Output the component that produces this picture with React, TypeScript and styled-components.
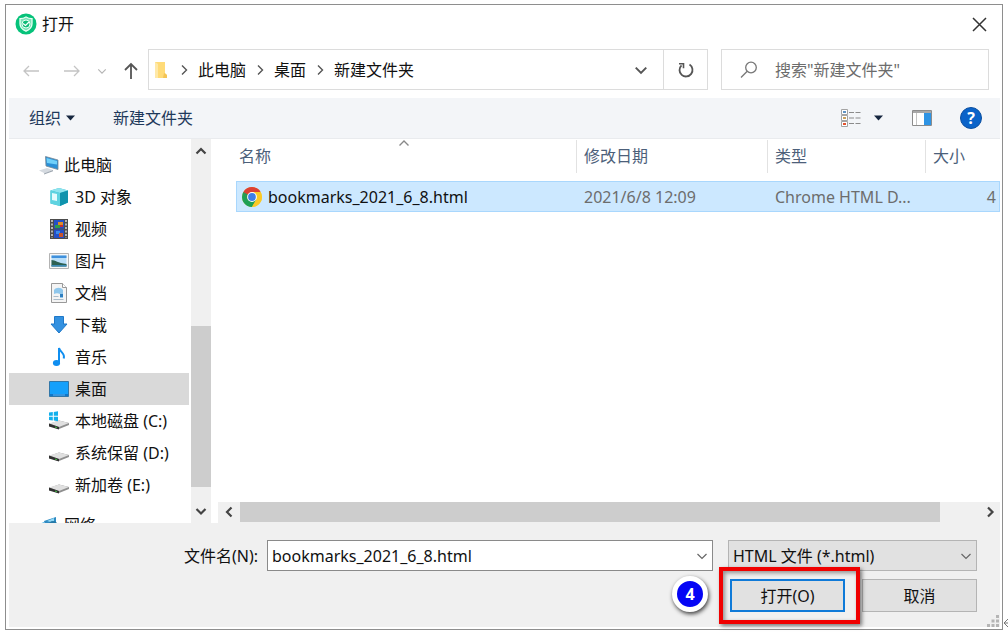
import React from 'react';
import styled, { createGlobalStyle } from 'styled-components';

const GlobalStyle = createGlobalStyle`
  *, *::before, *::after { box-sizing: border-box; }
  body { margin: 0; background: #fff; }
  body, button, input, select {
    font-family: 'Noto Sans', 'Noto Sans CJK SC', sans-serif;
    font-size: 16px;
    line-height: 24px;
    color: #111;
  }
  button { padding: 0; border: 0; background: none; }
  svg { display: block; flex: none; }
`;

const Page = styled.div`
  position: relative;
  min-height: 100vh;
  padding: 4px 5px;
  display: flex;
  overflow: hidden;
`;
const Dialog = styled.main`
  flex: 1;
  min-width: 0;
  display: flex;
  flex-direction: column;
  padding: 0 2px 2px 3px;
  border: 1px solid #8e8e8e;
  background: #fff;
`;

const TitleBar = styled.header`
  height: 44px;
  flex: none;
  display: flex;
  align-items: center;
  gap: 5px;
  padding: 0 13px 6px 6px;
`;
const Title = styled.h1`
  flex: 1;
  margin: 0;
  font-size: 16px;
  font-weight: 400;
`;

const NavRow = styled.div`
  height: 41px;
  flex: none;
  display: flex;
  margin-bottom: 8px;
  padding-right: 11px;
`;
const NavButtons = styled.div`
  width: 139px;
  flex: none;
  display: flex;
  align-items: center;
  justify-content: space-between;
  padding: 2px 8px 0 13px;
`;
const NavPair = styled.div`
  display: flex;
  gap: 23px;
`;
const AddressBar = styled.nav`
  flex: 1;
  min-width: 0;
  display: flex;
  align-items: center;
  border: 1px solid #dcdcdc;
  padding-left: 5px;
`;
const CrumbGap = styled.span`
  width: 28px;
  display: flex;
  justify-content: center;
  &:nth-child(2) { margin-left: 3px; }
`;
const AddressMenu = styled.button`
  width: 44px;
  height: 100%;
  margin-left: auto;
  display: grid;
  place-items: center;
`;
const RefreshButton = styled.button`
  width: 44px;
  height: 100%;
  border-left: 1px solid #dcdcdc;
  display: grid;
  place-items: center;
`;
const SearchBox = styled.label`
  width: 268px;
  margin-left: 13px;
  display: flex;
  align-items: center;
  gap: 17px;
  border: 1px solid #dcdcdc;
  padding-left: 18px;
  input {
    flex: 1;
    min-width: 0;
    padding: 0;
    border: 0;
    outline: 0;
    background: none;
  }
  input::placeholder { color: #6c6c6c; opacity: 1; }
`;

const Toolbar = styled.div`
  height: 41px;
  flex: none;
  display: flex;
  align-items: center;
  padding: 0 18px 0 20px;
  background: #f3f5f8;
  border-bottom: 1px solid #e9ebee;
`;
const ToolButton = styled.button<{ $left?: number }>`
  display: flex;
  align-items: center;
  gap: 5px;
  margin-left: ${p => p.$left ?? 0}px;
  color: #1e395b;
`;
const Spacer = styled.span`
  flex: 1;
`;

const Body = styled.div`
  flex: 1 0 384px;
  height: 384px;
  display: flex;
`;
const Tree = styled.ul`
  width: 180px;
  flex: none;
  margin: 0;
  padding: 10px 0 0;
  list-style: none;
  overflow: hidden;
`;
const TreeItem = styled.li<{ $root?: boolean; $selected?: boolean; $apart?: boolean }>`
  height: 32px;
  display: flex;
  align-items: center;
  gap: ${p => (p.$root ? 5 : 6)}px;
  margin-top: ${p => (p.$apart ? 8 : 0)}px;
  padding-left: ${p => (p.$root ? 30 : 40)}px;
  background: ${p => (p.$selected ? '#d9d9d9' : 'transparent')};
  white-space: nowrap;
`;
const VScroll = styled.div`
  width: 20px;
  flex: none;
  margin-left: 2px;
  display: flex;
  flex-direction: column;
  background: #f0f0f0;
`;
const HScroll = styled.div`
  height: 21px;
  flex: none;
  margin: auto 0 0 7px;
  display: flex;
  background: #f0f0f0;
`;
const ScrollArrow = styled.button<{ $wide?: boolean }>`
  width: ${p => (p.$wide ? 21 : 20)}px;
  height: ${p => (p.$wide ? 20 : 24)}px;
  flex: none;
  display: grid;
  place-items: center;
`;
const Track = styled.div<{ $before: number; $thumb: number; $after: number; $vertical?: boolean }>`
  flex: 1;
  display: grid;
  ${p => (p.$vertical ? 'grid-template-rows' : 'grid-template-columns')}:
    ${p => p.$before}fr ${p => p.$thumb}fr ${p => p.$after}fr;
`;
const Thumb = styled.div<{ $vertical?: boolean }>`
  ${p => (p.$vertical ? 'grid-row: 2' : 'grid-column: 2; height: 20px')};
  background: #cdcdcd;
`;

const FilePane = styled.section`
  flex: 1;
  min-width: 0;
  display: flex;
  flex-direction: column;
`;
const FileTableBox = styled.div`
  position: relative;
  padding-left: 25px;
`;
const FileTable = styled.table`
  width: 100%;
  table-layout: fixed;
  border-collapse: collapse;
`;
const HeadCell = styled.th<{ $width?: number; $first?: boolean }>`
  width: ${p => (p.$width ? `${p.$width}px` : 'auto')};
  height: 42px;
  padding: 1px 0 0;
  vertical-align: top;
  text-align: left;
  font-weight: 400;
  color: #4c607a;
  div {
    height: 33px;
    padding: 4px 0 0 ${p => (p.$first ? 3 : 7)}px;
    border-left: ${p => (p.$first ? '0' : '1px solid #e2e2e2')};
  }
`;
const SortMark = styled.span`
  position: absolute;
  left: 187px;
  top: -2px;
`;
const FileRow = styled.tr`
  height: 31px;
  background: #cce8ff;
  outline: 1px solid #a9d7fd;
  outline-offset: -1px;
`;
const Cell = styled.td<{ $end?: boolean }>`
  padding: 0 4px 0 8px;
  color: #6d6d6d;
  text-align: ${p => (p.$end ? 'right' : 'left')};
  white-space: nowrap;
`;
const NameCell = styled(Cell)`
  padding: 0 0 0 6px;
  color: #111;
  div { display: flex; align-items: center; gap: 6px; }
`;

const Footer = styled.form`
  height: 104px;
  flex: none;
  position: relative;
  display: flex;
  flex-direction: column;
  gap: 8px;
  padding: 17px 23px 0 0;
  background: #f0f0f0;
`;
const FooterRow = styled.div`
  display: flex;
  align-items: center;
  justify-content: flex-end;
`;
const NameLabel = styled.label`
  width: 249px;
  flex: none;
  margin-right: 9px;
  text-align: right;
`;
const Field = styled.div<{ $select?: boolean }>`
  ${p => (p.$select ? 'width: 249px; margin-left: 15px; flex: none' : 'flex: 1; min-width: 0')};
  height: 31px;
  display: grid;
  align-items: center;
  border: 1px solid ${p => (p.$select ? '#b4b4b4' : '#8a8a8a')};
  background: ${p => (p.$select ? '#e1e1e1' : '#fff')};
  > * { grid-area: 1 / 1; }
  > svg { justify-self: end; margin-right: 4px; pointer-events: none; }
  input, select {
    width: 100%;
    height: 28px;
    padding: 0 24px 0 4px;
    border: 0;
    outline: 0;
    appearance: none;
    background: none;
  }
`;
const PushButton = styled.button<{ $primary?: boolean }>`
  width: 115px;
  height: 33px;
  background: #e1e1e1;
  border: ${p => (p.$primary ? '2px solid #0f7ad8' : '1px solid #b4b4b4')};
`;
const Highlighted = styled.div`
  position: relative;
  margin-right: 17px;
`;
const RedFrame = styled.span`
  position: absolute;
  inset: -12px -15px -12px -11px;
  border: 4px solid #f00000;
  box-shadow: 2px 2px 4px rgba(0, 0, 0, 0.5), inset 2px 2px 4px rgba(0, 0, 0, 0.4);
  pointer-events: none;
`;
const StepBadge = styled.span`
  position: absolute;
  left: -58px;
  top: -3px;
  width: 36px;
  height: 36px;
  display: grid;
  place-items: center;
  border: 5px solid #fff;
  border-radius: 50%;
  background: #0505f5;
  box-shadow: 1px 2px 4px rgba(0, 0, 0, 0.75);
  color: #fff;
  font-weight: 700;
`;
const Grip = styled.span`
  position: absolute;
  right: 1px;
  bottom: 0;
`;
const ReturnMark = styled.span`
  position: absolute;
  right: 0;
  bottom: 6px;
`;

type Dir = 'up' | 'down' | 'left' | 'right';
const chevronPaths: Record<Dir, string> = {
  up: 'M1.5 8.5 6 4l4.5 4.5',
  down: 'M1.5 4 6 8.5 10.5 4',
  left: 'M8.5 1.5 4 6l4.5 4.5',
  right: 'M4 1.5 8.5 6 4 10.5',
};
const Chevron = ({ dir, size = 12, color = '#555', width = 1.4 }: { dir: Dir; size?: number; color?: string; width?: number }) => (
  <svg width={size} height={size} viewBox="0 0 12 12" fill="none" stroke={color} strokeWidth={width}>
    <path d={chevronPaths[dir]} />
  </svg>
);
const Caret = () => (
  <svg width="9" height="6" viewBox="0 0 9 6"><path d="M0 .5h9L4.500 5.500z" fill="#16263f" /></svg>
);
const Arrow = ({ dir, color }: { dir: 'left' | 'right' | 'up'; color: string }) => (
  <svg width="18" height="18" viewBox="0 0 18 18" fill="none" stroke={color} strokeWidth={dir === 'up' ? 1.8 : 1.3}>
    {dir === 'left' && <path d="M17 9H2M7 4 2 9l5 5" />}
    {dir === 'right' && <path d="M1 9h15M11 4l5 5-5 5" />}
    {dir === 'up' && <path d="M9 17V2M3 8l6-6 6 6" />}
  </svg>
);

const AppIcon = () => (
  <svg width="22" height="22" viewBox="0 0 22 22">
    <circle cx="11" cy="11" r="10.500" fill="#06c27a" />
    <path d="M11 4c2 1.400 4 1.700 6 1.700v5c0 3.800-2.500 6-6 7.500-3.500-1.500-6-3.700-6-7.500v-5c2 0 4-.3 6-1.700z" fill="#7be3b7" stroke="#e9fff5" strokeWidth="1.300" />
    <circle cx="11" cy="11" r="4" fill="#0fbd78" stroke="#e9fff5" strokeWidth="1" />
    <path d="M8 10.500 10.500 12.500 14 9" fill="none" stroke="#fff" strokeWidth="1.300" />
  </svg>
);
const FolderIcon = () => (
  <svg width="13" height="18" viewBox="0 0 13 18">
    <path d="M1 1h10v11l2 2v3H1z" fill="#ffdb78" />
    <path d="M1 1l3 2v14H1z" fill="#ffe9a8" />
    <path d="M9 17l1-5 3 2v3z" fill="#f4c455" />
  </svg>
);
const RefreshIcon = () => (
  <svg width="18" height="18" viewBox="0 0 18 18" fill="none" stroke="#555" strokeWidth="1.800">
    <path d="M12.500 3.500A6.500 6.500 0 1 1 4.500 4.300" />
    <path d="M2 2.800h4.500v4.500" strokeWidth="1.600" />
  </svg>
);
const SearchIcon = () => (
  <svg width="18" height="18" viewBox="0 0 18 18" fill="none" stroke="#777" strokeWidth="1.300">
    <circle cx="11" cy="6.500" r="5.300" />
    <path d="M7.200 10.300 1 16.500" />
  </svg>
);
const CloseIcon = () => (
  <svg width="15" height="15" viewBox="0 0 15 15" stroke="#333" strokeWidth="1.500"><path d="M1 1l13 13M14 1 1 14" /></svg>
);
const ViewIcon = () => (
  <svg width="20" height="18" viewBox="0 0 20 18" fill="none">
    <g stroke="#a3a3a3" fill="#fff">
      <path d="M.5.5h6v5h-6zM.5 6.500h6v5h-6zM.5 12.500h6v5h-6z" />
    </g>
    <path d="M2 2h3v2H2z" fill="#5f93c4" /><path d="M2 8h3v2H2z" fill="#c9a15d" /><path d="M2 14h3v2H2z" fill="#e2532f" />
    <path d="M8 3.500h5M14.500 3.500h5M8 9h5M14.500 9h5M8 14.500h5M14.500 14.500h5" stroke="#8b8b8b" strokeWidth="1.200" />
  </svg>
);
const PreviewIcon = () => (
  <svg width="20" height="16" viewBox="0 0 20 16">
    <path d="M.5.500h19v15H.5z" fill="#fff" stroke="#8c8c8c" />
    <path d="M1 1h18v2H1z" fill="#a8a8a8" />
    <path d="M12 3h7v12h-7z" fill="#2f94e4" />
    <path d="M4.500 3v12" stroke="#c4c4c4" />
  </svg>
);
const HelpDisc = styled.span`
  width: 22px;
  height: 22px;
  display: grid;
  place-items: center;
  border: 1px solid #0b4fa0;
  border-radius: 50%;
  background: #0a63c9;
  color: #fff;
  font-weight: 700;
  line-height: 20px;
`;

const PcIcon = () => (
  <svg width="20" height="20" viewBox="0 0 20 20">
    <path d="M6.500 1.500 19 5v9.500L7 11z" fill="#2a8fd6" stroke="#7a8893" strokeWidth=".8" />
    <path d="M7.500 3l10.500 3v3.500L8 8z" fill="#6fd0fa" />
    <path d="M0 15.500 8 13l6 2-8 3.500z" fill="#d5dae0" /><path d="M5 18.500l9-3.500v1.200L5 19.500z" fill="#9aa3ad" />
  </svg>
);
const CubeIcon = () => (
  <svg width="20" height="20" viewBox="0 0 20 20">
    <path d="M10 1l9 2.500v12L11 19l-9.500-2.500v-13z" fill="#2fb9cf" />
    <path d="M10 1l9 2.500L11 6 1.500 3.500z" fill="#8fe4ee" />
    <path d="M1.500 3.500 11 6v13l-9.500-2.500z" fill="#5fd3e0" />
    <path d="M3 6l5 1v7l-5-1z" fill="#e4fbfd" />
    <path d="M11 6l8-2.500v12L11 19z" fill="#0f93ad" />
  </svg>
);
const VideoIcon = () => (
  <svg width="20" height="20" viewBox="0 0 20 20">
    <path d="M1 0h18v20H1z" fill="#4c4c4c" />
    <path d="M5 1h10v8.500H5zM5 10.500h10V19H5z" fill="#2450c8" />
    <path d="M9 3h5v3H9z" fill="#e08c25" /><path d="M6 6h5v3H6z" fill="#2f9d4b" />
    <path d="M7 12h4v3H7z" fill="#3a8be8" /><path d="M10 14h4v4h-4z" fill="#c8552c" /><path d="M11 6h3v2h-3z" fill="#c62f2f" />
    <path d="M3 1v18M17 1v18" stroke="#d0d0d0" strokeWidth="1.600" strokeDasharray="2 1.500" />
  </svg>
);
const PictureIcon = () => (
  <svg width="20" height="16" viewBox="0 0 20 16">
    <path d="M.5.500h19v15H.5z" fill="#f7f7f7" stroke="#b3b3b3" />
    <path d="M2.500 2.500h15v11h-15z" fill="#b9def8" />
    <path d="M2.500 2.500h15V5h-15z" fill="#3f90dc" />
    <path d="M2.500 7c4 0 6 3 15 4v2.500h-15z" fill="#2d6152" /><path d="M2.500 12h15v1.500h-15z" fill="#3d8bb8" />
  </svg>
);
const DocIcon = () => (
  <svg width="20" height="20" viewBox="0 0 20 20">
    <path d="M2.500.500h11l4 4v15h-15z" fill="#f4f4f4" stroke="#999" />
    <path d="M13.500.500v4h4" fill="#fff" stroke="#999" />
    <path d="M5 7c2-3 7-3 9 0v8h-3v-4c-2-1-4-1-6 0z" fill="#8fc7ec" />
    <path d="M11 11h3v3h-3z" fill="#2f7fc0" />
    <path d="M4.500 13.500h5M4.500 16.500h10" stroke="#a9bccb" />
  </svg>
);
const DownloadIcon = () => (
  <svg width="20" height="20" viewBox="0 0 20 20">
    <path d="M5.500 1.500h9V9H18l-8 9-8-9h3.500z" fill="#3391e0" stroke="#1f78c8" />
  </svg>
);
const MusicIcon = () => (
  <svg width="20" height="20" viewBox="0 0 20 20">
    <ellipse cx="7.500" cy="16" rx="3.600" ry="2.900" fill="#0f8ef0" />
    <path d="M10 16V1c.7 4 6.500 5 4.700 10.500" fill="none" stroke="#0f8ef0" strokeWidth="2" />
  </svg>
);
const DesktopIcon = () => (
  <svg width="20" height="16" viewBox="0 0 20 16">
    <path d="M.5.500h19v15H.5z" fill="#15a0fb" stroke="#3277a8" />
    <path d="M1 13h18v2H1z" fill="#1177c9" /><path d="M4 14h12" stroke="#5fb4f4" />
  </svg>
);
const DriveIcon = ({ system }: { system?: boolean }) => (
  <svg width="20" height="20" viewBox="0 0 20 20">
    <path d="M0 13 10 9.500 20 12v2L10 18 0 15z" fill="#8f8f8f" />
    <path d="M0 12.500 10 9.500l10 2.500-10 4z" fill="#e0e0e0" />
    <path d="M0 12.500l10 3.500v2.500L0 15.500z" fill="#303030" /><path d="M6 15.500l2 .7v.8l-2-.6z" fill="#46d046" />
    {system && <path d="M0 1.500 3.800 1v3.800H0zM4.800.9 9 .3v4.500H4.800zM0 5.700h3.800v3.800L0 9zM4.800 5.700H9v4.500l-4.200-.6z" fill="#12b0ec" />}
  </svg>
);
const NetworkIcon = () => (
  <svg width="20" height="20" viewBox="0 0 20 20">
    <path d="M5 6l12-4v12L7 15z" fill="#2d8ac2" /><path d="M8 6l7-3v5z" fill="#93d8f5" />
    <circle cx="14" cy="11" r="5" fill="#2579a8" /><path d="M0 9l5-2v8l-5-2z" fill="#4cb4e6" />
  </svg>
);
const ChromeIcon = () => (
  <svg width="20" height="20" viewBox="0 0 20 20">
    <circle cx="10" cy="10" r="10" fill="#fbc926" />
    <path d="M10 10 1.340 5A10 10 0 0 0 10 20l4.330-7.500z" fill="#1ea055" />
    <path d="M1.340 5A10 10 0 0 1 18.660 5H10v5l-4.330 2.500z" fill="#dd4033" />
    <path d="M1.340 5 5.670 12.500 10 10z" fill="#1ea055" />
    <path d="M10 5h8.660A10 10 0 0 1 10 20l4.330-7.500z" fill="#fbc926" />
    <circle cx="10" cy="10" r="4.900" fill="#fff" /><circle cx="10" cy="10" r="3.900" fill="#3f7ee8" />
  </svg>
);

const places = [
  { name: '此电脑', icon: <PcIcon />, root: true },
  { name: '3D 对象', icon: <CubeIcon /> },
  { name: '视频', icon: <VideoIcon /> },
  { name: '图片', icon: <PictureIcon /> },
  { name: '文档', icon: <DocIcon /> },
  { name: '下载', icon: <DownloadIcon /> },
  { name: '音乐', icon: <MusicIcon /> },
  { name: '桌面', icon: <DesktopIcon />, selected: true },
  { name: '本地磁盘 (C:)', icon: <DriveIcon system /> },
  { name: '系统保留 (D:)', icon: <DriveIcon /> },
  { name: '新加卷 (E:)', icon: <DriveIcon /> },
  { name: '网络', icon: <NetworkIcon />, root: true, apart: true },
];
const crumbs = ['此电脑', '桌面', '新建文件夹'];

export default function App() {
  return (
    <Page>
      <GlobalStyle />
      <Dialog>
        <TitleBar>
          <AppIcon />
          <Title>打开</Title>
          <button aria-label="关闭"><CloseIcon /></button>
        </TitleBar>

        <NavRow>
          <NavButtons>
            <NavPair>
              <button aria-label="后退"><Arrow dir="left" color="#c4c4c4" /></button>
              <button aria-label="前进"><Arrow dir="right" color="#c4c4c4" /></button>
            </NavPair>
            <button aria-label="历史"><Chevron dir="down" size={10} color="#b5b5b5" /></button>
            <button aria-label="上移"><Arrow dir="up" color="#555" /></button>
          </NavButtons>
          <AddressBar>
            <FolderIcon />
            {crumbs.map(c => (
              <React.Fragment key={c}>
                <CrumbGap><Chevron dir="right" /></CrumbGap>
                <button>{c}</button>
              </React.Fragment>
            ))}
            <AddressMenu aria-label="以前的位置"><Chevron dir="down" size={14} width={1.700} /></AddressMenu>
            <RefreshButton aria-label="刷新"><RefreshIcon /></RefreshButton>
          </AddressBar>
          <SearchBox>
            <SearchIcon />
            <input type="text" aria-label="搜索" placeholder={'搜索"新建文件夹"'} />
          </SearchBox>
        </NavRow>

        <Toolbar>
          <ToolButton>组织<Caret /></ToolButton>
          <ToolButton $left={38}>新建文件夹</ToolButton>
          <Spacer />
          <ToolButton aria-label="视图"><ViewIcon /></ToolButton>
          <ToolButton aria-label="更多视图" $left={13}><Caret /></ToolButton>
          <ToolButton aria-label="预览窗格" $left={29}><PreviewIcon /></ToolButton>
          <ToolButton aria-label="帮助" $left={28}><HelpDisc>?</HelpDisc></ToolButton>
        </Toolbar>

        <Body>
          <Tree>
            {places.map(p => (
              <TreeItem key={p.name} $root={p.root} $selected={p.selected} $apart={p.apart}>
                {p.icon}
                {p.name}
              </TreeItem>
            ))}
          </Tree>
          <VScroll>
            <ScrollArrow aria-label="向上滚动"><Chevron dir="up" width={2.200} color="#444" /></ScrollArrow>
            <Track $vertical $before={163} $thumb={161} $after={12}><Thumb $vertical /></Track>
            <ScrollArrow aria-label="向下滚动"><Chevron dir="down" width={2.200} color="#444" /></ScrollArrow>
          </VScroll>
          <FilePane>
            <FileTableBox>
              <FileTable>
                <thead>
                  <tr>
                    <HeadCell $first><div>名称</div></HeadCell>
                    <HeadCell $width={191}><div>修改日期</div></HeadCell>
                    <HeadCell $width={158}><div>类型</div></HeadCell>
                    <HeadCell $width={75}><div>大小</div></HeadCell>
                  </tr>
                </thead>
                <tbody>
                  <FileRow>
                    <NameCell><div><ChromeIcon />bookmarks_2021_6_8.html</div></NameCell>
                    <Cell>2021/6/8 12:09</Cell>
                    <Cell>Chrome HTML D...</Cell>
                    <Cell $end>4</Cell>
                  </FileRow>
                </tbody>
              </FileTable>
              <SortMark><Chevron dir="up" color="#888" /></SortMark>
            </FileTableBox>
            <HScroll>
              <ScrollArrow $wide aria-label="向左滚动"><Chevron dir="left" width={2.200} color="#444" /></ScrollArrow>
              <Track $before={1} $thumb={700} $after={39}><Thumb /></Track>
              <ScrollArrow $wide aria-label="向右滚动"><Chevron dir="right" width={2.200} color="#444" /></ScrollArrow>
            </HScroll>
          </FilePane>
        </Body>

        <Footer onSubmit={e => e.preventDefault()}>
          <FooterRow>
            <NameLabel htmlFor="filename">文件名(N):</NameLabel>
            <Field>
              <input id="filename" type="text" defaultValue="bookmarks_2021_6_8.html" />
              <Chevron dir="down" color="#666" width={1.200} />
            </Field>
            <Field $select>
              <select aria-label="文件类型">
                <option>HTML 文件 (*.html)</option>
              </select>
              <Chevron dir="down" color="#666" width={1.200} />
            </Field>
          </FooterRow>
          <FooterRow>
            <Highlighted>
              <PushButton $primary type="submit">打开(O)</PushButton>
              <RedFrame />
              <StepBadge>4</StepBadge>
            </Highlighted>
            <PushButton type="button">取消</PushButton>
          </FooterRow>
          <Grip>
            <svg width="12" height="12" viewBox="0 0 12 12" fill="#b5b5b5">
              <path d="M9 0h3v3H9zM9 4.500h3v3H9zM9 9h3v3H9zM4.500 4.500h3v3h-3zM4.500 9h3v3h-3zM0 9h3v3H0z" />
            </svg>
          </Grip>
        </Footer>
      </Dialog>
      <ReturnMark>
        <svg width="5" height="10" viewBox="0 0 5 10" fill="none" stroke="#777"><path d="M5 1 1 5l4 4M1 5h4" /></svg>
      </ReturnMark>
    </Page>
  );
}
